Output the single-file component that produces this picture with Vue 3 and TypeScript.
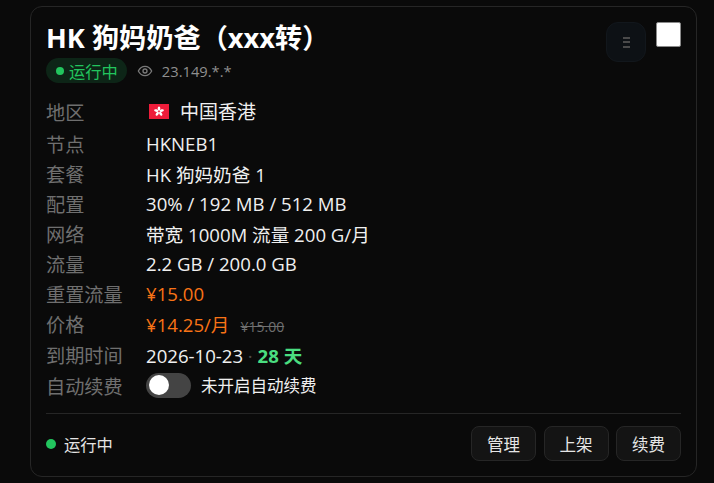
<script setup lang="ts">
const buttons: string[] = ['管理', '上架', '续费']
</script>

<template>
  <div class="page">
    <section class="card">
      <header class="head">
        <div class="head-main">
          <h1 class="title">HK 狗妈奶爸（xxx转）</h1>
          <div class="meta">
            <span class="pill"><i class="dot small"></i>运行中</span>
            <svg class="eye" width="16" height="16" viewBox="0 0 24 24" fill="none" stroke="#7a7a7a" stroke-width="2" stroke-linecap="round" stroke-linejoin="round">
              <path d="M2 12s3.6-7 10-7 10 7 10 7-3.6 7-10 7-10-7-10-7z" />
              <circle cx="12" cy="12" r="3" />
            </svg>
            <span class="ip">23.149.*.*</span>
          </div>
        </div>
        <div class="tools">
          <button class="grip" aria-label="拖动">
            <span></span><span></span><span></span>
          </button>
          <span class="check"></span>
        </div>
      </header>

      <div class="rows">
        <div class="row first">
          <span class="label">地区</span>
          <span class="value region">
            <svg class="flag" width="20" height="15" viewBox="0 0 20 15">
              <rect width="20" height="15" fill="#ee1c3a" />
              <g fill="#fff">
                <ellipse cx="10" cy="4.6" rx="1.3" ry="2.2" />
                <ellipse cx="10" cy="4.6" rx="1.3" ry="2.2" transform="rotate(72 10 7.5)" />
                <ellipse cx="10" cy="4.6" rx="1.3" ry="2.2" transform="rotate(144 10 7.5)" />
                <ellipse cx="10" cy="4.6" rx="1.3" ry="2.2" transform="rotate(216 10 7.5)" />
                <ellipse cx="10" cy="4.6" rx="1.3" ry="2.2" transform="rotate(288 10 7.5)" />
              </g>
            </svg>
            中国香港
          </span>
        </div>
        <div class="row"><span class="label">节点</span><span class="value">HKNEB1</span></div>
        <div class="row"><span class="label">套餐</span><span class="value">HK 狗妈奶爸 1</span></div>
        <div class="row"><span class="label">配置</span><span class="value">30% / 192 MB / 512 MB</span></div>
        <div class="row"><span class="label">网络</span><span class="value">带宽 1000M 流量 200 G/月</span></div>
        <div class="row"><span class="label">流量</span><span class="value">2.2 GB / 200.0 GB</span></div>
        <div class="row"><span class="label">重置流量</span><span class="value price">¥15.00</span></div>
        <div class="row">
          <span class="label">价格</span>
          <span class="value price">¥14.25/月<s class="old">¥15.00</s></span>
        </div>
        <div class="row tall">
          <span class="label">到期时间</span>
          <span class="value">2026-10-23 <span class="sep">·</span> <b class="days">28 天</b></span>
        </div>
        <div class="row">
          <span class="label">自动续费</span>
          <span class="value auto">
            <span class="switch"><span class="knob"></span></span>
            <span class="auto-text">未开启自动续费</span>
          </span>
        </div>
      </div>

      <footer class="foot">
        <span class="status"><i class="dot"></i>运行中</span>
        <div class="actions">
          <button v-for="b in buttons" :key="b" class="btn">{{ b }}</button>
        </div>
      </footer>
    </section>
  </div>
</template>

<style>
html, body { margin: 0; background: #0a0a0a; }
</style>

<style scoped>
.page {
  width: 714px;
  height: 483px;
  box-sizing: border-box;
  padding: 6px 17px 6px 30px;
  background: #0a0a0a;
  font-family: "Open Sans", "Noto Sans CJK SC", sans-serif;
  overflow: hidden;
}
.card {
  height: 471px;
  box-sizing: border-box;
  border: 1px solid #262626;
  border-radius: 12px;
  background: #0a0a0a;
  padding: 15px 15px 0 15px;
  color: #f0f0f0;
}
.head { display: flex; justify-content: space-between; align-items: flex-start; }
.title { margin: 0; font-size: 27.2px; line-height: 32px; font-weight: 700; color: #fff; }
.meta { display: flex; align-items: center; margin-top: 4px; height: 25px; }
.pill {
  display: flex; align-items: center; height: 25px; padding: 0 9px 0 10px;
  border-radius: 13px; background: #0d2517; color: #22c55e; font-size: 16.3px;
}
.dot { width: 10px; height: 10px; border-radius: 50%; background: #22c55e; display: inline-block; }
.dot.small { width: 8px; height: 8px; margin-right: 5px; }
.eye { margin-left: 10px; }
.ip { margin-left: 9px; font-size: 14.7px; color: #8f8f8f; }
.tools { display: flex; gap: 10px; align-items: flex-start; }
.grip {
  width: 40px; height: 40px; padding: 0; border-radius: 12px;
  border: 1px solid #12171c; background: #0d1115;
  display: flex; flex-direction: column; align-items: center; justify-content: center; gap: 2.5px;
}
.grip span { width: 7px; height: 2px; background: #4a4a4a; }
.check {
  width: 25px; height: 25px; box-sizing: border-box;
  background: #fff; border: 1px solid #8a8a8a; border-radius: 2px;
}
.rows { margin-top: 11px; }
.row { display: flex; align-items: center; height: 30px; }
.row.first { height: 34px; }
.row.tall { height: 32px; }
.label { width: 100px; flex: none; padding-top: 1px; font-size: 19.2px; color: #6f6f6f; }
.value { font-size: 18.6px; color: #f0f0f0; }
.region { display: flex; align-items: center; font-size: 19px; }
.flag { margin: 0 11px 0 3px; }
.price { color: #f97316; }
.old { margin-left: 11px; font-size: 14px; color: #6f6f6f; }
.sep { color: #4a4a4a; }
.days { color: #4ade80; font-weight: 700; }
.auto { display: flex; align-items: center; }
.switch { width: 45px; height: 25px; border-radius: 13px; background: #444; display: flex; align-items: center; padding-left: 3px; box-sizing: border-box; }
.knob { width: 20px; height: 20px; border-radius: 50%; background: #fff; }
.auto-text { margin-left: 10px; font-size: 16.5px; }
.foot {
  margin-top: 13px; padding-top: 12px; border-top: 1px solid #262626;
  display: flex; justify-content: space-between; align-items: center;
}
.status { display: flex; align-items: center; gap: 8px; font-size: 16.3px; color: #e5e5e5; }
.actions { display: flex; gap: 7.5px; }
.btn {
  width: 65px; height: 35px; box-sizing: border-box; border-radius: 8px;
  border: 1px solid #262626; background: #141414; color: #e5e5e5;
  font-family: inherit; font-size: 16.5px; padding: 0;
}
</style>
